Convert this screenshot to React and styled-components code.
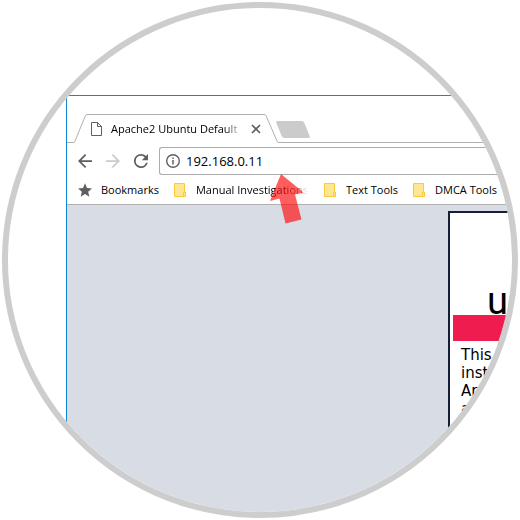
import React from 'react'
import styled, { createGlobalStyle } from 'styled-components'

const GlobalStyle = createGlobalStyle`
* {
  box-sizing: border-box;
}
body {
  margin: 0;
  background: #fff;
  font-family: 'Open Sans', 'Noto Sans', sans-serif;
  color: #000;
}
svg {
  display: block;
  flex: none;
}
`

const Lens = styled.main`
  position: relative;
  display: flex;
  margin: 2px;
  padding: 87px 4px 0 58px;
  aspect-ratio: 1;
  border: 6px solid #cdcdcd;
  border-radius: 50%;
  overflow: hidden;
`

const Browser = styled.div`
  display: flex;
  flex-direction: column;
  flex: 1;
  min-width: 0;
  overflow: hidden;
  border-top: 1px solid #0f86d2;
  border-left: 1px solid #0f86d2;
`

const TabStrip = styled.div`
  display: flex;
  padding-top: 18px;
`

const StripEdge = styled.div`
  width: 6px;
  border-bottom: 1px solid #b0b0b0;
`

const StripRest = styled.div`
  flex: 1;
  padding-top: 7px;
  border-bottom: 1px solid #b0b0b0;
`

const Tab = styled.div`
  position: relative;
  display: flex;
  align-items: center;
  width: 206px;
  height: 29px;
  padding: 0 18px;
`

const TabOutline = styled.svg`
  position: absolute;
  top: 0;
  left: 0;
`

const TabTitle = styled.span`
  width: 132px;
  margin: 0 8px 0 9px;
  font-size: 11px;
  line-height: 16px;
  white-space: nowrap;
  overflow: hidden;
  mask-image: linear-gradient(to right, #000 86%, transparent);
`

const IconButton = styled.button`
  display: block;
  padding: 0;
  border: 0;
  background: none;
  color: ${(props) => (props.disabled ? '#cbcbcb' : '#5f5f5f')};
`

const NewTabButton = styled.button`
  display: block;
  width: 28px;
  height: 17px;
  padding: 0;
  border: 0;
  border-radius: 2px;
  background: #cbcbcb;
  transform: skewX(22deg);
`

const Toolbar = styled.div`
  display: flex;
  align-items: center;
  gap: 14px;
  padding: 4px 0 0 11px;
`

const AddressBar = styled.label`
  display: flex;
  align-items: center;
  flex: 1;
  gap: 6px;
  height: 28px;
  margin-left: -3px;
  padding-left: 6px;
  border: 1px solid #ababab;
  border-right: 0;
  border-radius: 3px 0 0 3px;
`

const AddressInput = styled.input`
  flex: 1;
  min-width: 0;
  padding: 0;
  border: 0;
  outline: 0;
  background: none;
  color: #000;
  font-family: inherit;
  font-size: 13px;
`

const BookmarkBar = styled.nav`
  display: flex;
  align-items: center;
  gap: 15px;
  height: 30px;
  padding-left: 11px;
  border-bottom: 1px solid #b0b0b0;
`

const Bookmark = styled.a`
  display: flex;
  align-items: center;
  flex: none;
  gap: 9px;
  color: #000;
  text-decoration: none;
  font-size: 11px;
  line-height: 16px;
`

const BookmarkName = styled.span`
  min-width: ${(props) => (props.$faded ? '113px' : '0')};
  overflow: hidden;
  white-space: nowrap;
  mask-image: ${(props) => (props.$faded ? 'linear-gradient(to right, #000 78%, transparent)' : 'none')};
`

const Viewport = styled.div`
  display: flex;
  justify-content: flex-end;
  flex: 1;
  padding-top: 6px;
  background: #d8dce4;
`

const Page = styled.article`
  width: 60px;
  padding: 3px 0 0 3px;
  border: 2px solid #151f38;
  border-width: 2px 0 0 2px;
  background: #fff;
`

const PageLogo = styled.div`
  display: flex;
  align-items: flex-end;
  height: 99px;
  padding-left: 34px;
  font-family: Roboto, sans-serif;
  font-size: 38px;
  line-height: 27px;
`

const Banner = styled.div`
  height: 26px;
  background: #ef1c4f;
`

const PageText = styled.p`
  margin: 0;
  padding: 5px 0 0 8px;
  font-family: 'DejaVu Sans', sans-serif;
  font-size: 15px;
  line-height: 18px;
`

const Pointer = styled.svg`
  position: absolute;
  top: 166px;
  left: 262px;
`

const bookmarks = [
  { name: 'Manual Investigations', faded: true },
  { name: 'Text Tools' },
  { name: 'DMCA Tools' },
]

function MaterialIcon({ d }) {
  return (
    <svg width="14" height="14" viewBox="4 4 16 16" fill="currentColor">
      <path d={d} />
    </svg>
  )
}

function FolderIcon() {
  return (
    <svg width="13" height="14" viewBox="0 0 13 14">
      <path d="M.5.5h10v9h1v4H.5z" fill="#ffe791" stroke="#fbc93d" />
      <path d="M9.500 13.500v-4h2v4z" fill="#ffe791" stroke="#fbc93d" />
    </svg>
  )
}

function App() {
  return (
    <>
      <GlobalStyle />
      <Lens>
        <Browser>
          <TabStrip>
            <StripEdge />
            <Tab>
              <TabOutline width="206" height="29" fill="none" stroke="#b0b0b0">
                <path d="M0 28.500 Q1.500 28.500 2 27 L12.500 1.500 Q13 .5 14 .5 H191 Q192.500 .5 193 1.500 L204 27 Q204.500 28.500 206 28.500" />
              </TabOutline>
              <svg width="11" height="14" viewBox="0 0 11 14" fill="none" stroke="#5f5f5f">
                <path d="M.5.5h6l4 4v9H.5zM6.500.5v4h4" />
              </svg>
              <TabTitle>Apache2 Ubuntu Default</TabTitle>
              <IconButton aria-label="Close tab">
                <svg width="10" height="10" viewBox="0 0 10 10" stroke="currentColor" strokeWidth="1.700">
                  <path d="M1 1l8 8M9 1l-8 8" />
                </svg>
              </IconButton>
            </Tab>
            <StripRest>
              <NewTabButton aria-label="New tab" />
            </StripRest>
          </TabStrip>
          <Toolbar>
            <IconButton aria-label="Back">
              <MaterialIcon d="M20 11H7.830l5.590-5.590L12 4l-8 8 8 8 1.410-1.410L7.830 13H20z" />
            </IconButton>
            <IconButton aria-label="Forward" disabled>
              <MaterialIcon d="M12 4l-1.410 1.410L16.170 11H4v2h12.170l-5.580 5.590L12 20l8-8z" />
            </IconButton>
            <IconButton aria-label="Reload">
              <MaterialIcon d="M17.650 6.350A7.960 7.960 0 0 0 12 4a8 8 0 1 0 7.730 10h-2.080A6 6 0 1 1 12 6c1.660 0 3.140.69 4.220 1.780L13 11h7V4z" />
            </IconButton>
            <AddressBar>
              <svg width="14" height="14" viewBox="0 0 14 14" fill="none" stroke="#5f5f5f">
                <circle cx="7" cy="7" r="6.300" strokeWidth="1.400" />
                <path d="M7 6v4.500M7 3.500v1.500" strokeWidth="1.500" />
              </svg>
              <AddressInput aria-label="Address" defaultValue="192.168.0.11" />
            </AddressBar>
          </Toolbar>
          <BookmarkBar>
            <Bookmark href="#">
              <svg width="14" height="14" viewBox="2 2 20 19" fill="#5f5f5f">
                <path d="M12 17.270L18.180 21l-1.640-7.030L22 9.240l-7.190-.61L12 2 9.190 8.630 2 9.240l5.460 4.730L5.820 21z" />
              </svg>
              <BookmarkName>Bookmarks</BookmarkName>
            </Bookmark>
            {bookmarks.map((item) => (
              <Bookmark href="#" key={item.name}>
                <FolderIcon />
                <BookmarkName $faded={item.faded}>{item.name}</BookmarkName>
              </Bookmark>
            ))}
          </BookmarkBar>
          <Viewport>
            <Page>
              <PageLogo>u</PageLogo>
              <Banner />
              <PageText>
                This
                <br />
                inst
                <br />
                Ap
                <br />a
              </PageText>
            </Page>
          </Viewport>
        </Browser>
        <Pointer width="34" height="50" viewBox="0 0 34 50">
          <path d="M11 0L0 27l9.500-2.500L15.500 49.500l16-4L25 20.500l8.500-2z" fill="#ff0a0a" fillOpacity=".66" />
        </Pointer>
      </Lens>
    </>
  )
}

export default App
